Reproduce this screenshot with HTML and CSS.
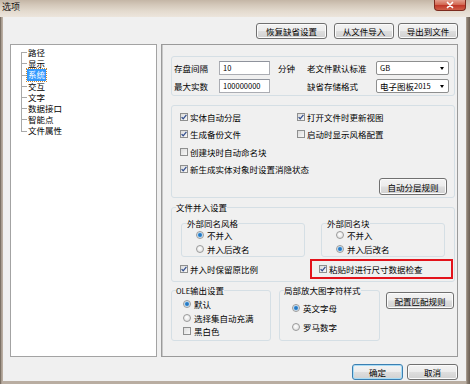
FILE: index.html
```html
<!DOCTYPE html>
<html lang="zh-CN">
<head>
<meta charset="UTF-8" />
<title>选项</title>
<link rel="stylesheet" href="styles.css">
</head>
<body>
<div class="window">
  <div class="titlebar">
    <span class="title">选项</span>
    <span class="close"><svg width="12" height="8" viewBox="0 0 12 8"><path d="M3.5 1.5L8.5 6.5M8.5 1.5L3.5 6.5" stroke="#fff" stroke-width="1.7" stroke-linecap="round"/></svg></span>
  </div>

  <div class="client">
    <div class="toolbar">
      <button class="btn b-restore">恢复缺省设置</button>
      <button class="btn b-file">从文件导入</button>
      <button class="btn b-file">导出到文件</button>
    </div>

    <div class="main">
      <ul class="tree">
        <li>路径</li>
        <li>显示</li>
        <li><span class="picked">系统</span></li>
        <li>交互</li>
        <li>文字</li>
        <li>数据接口</li>
        <li>智能点</li>
        <li>文件属性</li>
      </ul>

      <div class="panel">
        <!-- 存盘 -->
        <div class="grp g-save">
          <span class="lbl">存盘间隔</span>
          <span class="input">10</span>
          <span class="unit">分钟</span>
          <span class="lbl">老文件默认标准</span>
          <span class="combo"><span class="num">GB</span><i class="arrow"></i></span>

          <span class="lbl">最大实数</span>
          <span class="input">100000000</span>
          <span class="unit"></span>
          <span class="lbl">缺省存储格式</span>
          <span class="combo">电子图板<span class="num">2015</span><i class="arrow"></i></span>
        </div>

        <!-- 选项 -->
        <div class="grp g-opt">
          <div class="opts">
            <label class="chk"><span class="cb"><svg width="6" height="6" viewBox="0 0 6 6"><path d="M0.6 3.1L2.2 4.8L5.4 0.8" fill="none" stroke="#34508f" stroke-width="1.3"/></svg></span>实体自动分层</label>
            <label class="chk"><span class="cb"><svg width="6" height="6" viewBox="0 0 6 6"><path d="M0.6 3.1L2.2 4.8L5.4 0.8" fill="none" stroke="#34508f" stroke-width="1.3"/></svg></span>打开文件时更新视图</label>
            <label class="chk"><span class="cb"><svg width="6" height="6" viewBox="0 0 6 6"><path d="M0.6 3.1L2.2 4.8L5.4 0.8" fill="none" stroke="#34508f" stroke-width="1.3"/></svg></span>生成备份文件</label>
            <label class="chk"><span class="cb"></span>启动时显示风格配置</label>
            <label class="chk wide"><span class="cb"></span>创建块时自动命名块</label>
            <label class="chk wide"><span class="cb"><svg width="6" height="6" viewBox="0 0 6 6"><path d="M0.6 3.1L2.2 4.8L5.4 0.8" fill="none" stroke="#34508f" stroke-width="1.3"/></svg></span>新生成实体对象时设置消隐状态</label>
          </div>
          <button class="btn b-rule">自动分层规则</button>
        </div>

        <!-- 文件并入设置 -->
        <fieldset class="fs g-merge">
          <legend>文件并入设置</legend>
          <div class="merge-row">
            <fieldset class="fs sub">
              <legend>外部同名风格</legend>
              <label class="opt"><span class="rd on"></span>不并入</label>
              <label class="opt"><span class="rd"></span>并入后改名</label>
            </fieldset>
            <fieldset class="fs sub">
              <legend>外部同名块</legend>
              <label class="opt"><span class="rd"></span>不并入</label>
              <label class="opt"><span class="rd on"></span>并入后改名</label>
            </fieldset>
          </div>
          <div class="merge-foot">
            <label class="chk keep"><span class="cb"><svg width="6" height="6" viewBox="0 0 6 6"><path d="M0.6 3.1L2.2 4.8L5.4 0.8" fill="none" stroke="#34508f" stroke-width="1.3"/></svg></span>并入时保留原比例</label>
            <div class="flag">
              <label class="chk"><span class="cb"><svg width="6" height="6" viewBox="0 0 6 6"><path d="M0.6 3.1L2.2 4.8L5.4 0.8" fill="none" stroke="#34508f" stroke-width="1.3"/></svg></span>粘贴时进行尺寸数据检查</label>
            </div>
          </div>
        </fieldset>

        <!-- OLE / 局部放大 -->
        <div class="bottom-row">
          <fieldset class="fs g-ole">
            <legend><span class="num">OLE</span>输出设置</legend>
            <label class="opt"><span class="rd on"></span>默认</label>
            <label class="opt"><span class="rd"></span>选择集自动充满</label>
            <label class="opt"><span class="cb"></span>黑白色</label>
          </fieldset>
          <fieldset class="fs g-zoom">
            <legend>局部放大图字符样式</legend>
            <label class="opt"><span class="rd on"></span>英文字母</label>
            <label class="opt"><span class="rd"></span>罗马数字</label>
          </fieldset>
          <button class="btn b-match">配置匹配规则</button>
        </div>
      </div>
    </div>

    <div class="footer">
      <button class="btn b-ok">确定</button>
      <button class="btn b-cancel">取消</button>
    </div>
  </div>
</div>
</body>
</html>
```

FILE: styles.css
```css
*{box-sizing:border-box}
html,body{margin:0;height:100%}
body{
  width:470px;
  height:384px;
  overflow:hidden;
  background:#75695e;
  font-family:"Noto Sans CJK SC","Noto Sans",sans-serif;
  font-size:8.5px;
  color:#000;
}

.window{
  height:384px;
  display:flex;
  flex-direction:column;
  background:linear-gradient(90deg,#5f5449 0,#9a8e82 1px,#b9ada1 2px,#b9ada1 466px,#8d8174 467px,#6b5f54 470px);
}

/* 标题栏 */
.titlebar{
  height:17px;
  display:flex;
  align-items:flex-start;
  background:linear-gradient(180deg,#c4b6a6 0,#d4c8ba 5px,#e3dace 11px,#ece5dc 17px);
}
.title{
  padding-left:2px;
  line-height:14px;
  font-size:9px;
  color:#111;
}
.close{
  margin-left:auto;
  margin-right:4px;
  width:32px;
  height:11px;
  display:grid;
  place-items:center;
  border:1px solid #7c2a1e;
  border-top:0;
  border-radius:0 0 4px 4px;
  background:linear-gradient(180deg,#e3a08f 0,#d36a54 45%,#c0392a 55%,#d0614a 100%);
}

.client{
  height:364px;
  margin:0 4px 3px 3px;
  background:#f0f0f0;
}

/* 按钮 */
.btn{
  height:16px;
  padding:0;
  font:inherit;
  color:#000;
  border:1px solid #707070;
  border-radius:3px;
  background:linear-gradient(180deg,#f3f3f3 0,#ececec 48%,#dedede 52%,#d1d1d1 100%);
  box-shadow:inset 0 0 0 1px #fbfbfb;
}
.toolbar{
  height:22px;
  padding:6px 8px 0 0;
  display:flex;
  justify-content:flex-end;
  gap:4px;
}
.b-restore{width:71px;margin-right:3px}
.b-file{width:60px}

.main{
  height:313px;
  margin-top:5px;
  padding-left:7px;
  display:flex;
  gap:4px;
}

/* 树 */
.tree{
  width:147px;
  height:313px;
  margin:0;
  padding:2px 0 0;
  list-style:none;
  background:#fff;
  border:1px solid #a3a3a3;
}
.tree li{
  line-height:11.2px;
  padding-left:17px;
  white-space:nowrap;
  background:
    linear-gradient(#a9a9a9,#a9a9a9) 10px 0/1px 100% no-repeat,
    linear-gradient(#a9a9a9,#a9a9a9) 10px 50%/6px 1px no-repeat;
}
.tree li:first-child{
  background:
    linear-gradient(#a9a9a9,#a9a9a9) 10px 100%/1px 50% no-repeat,
    linear-gradient(#a9a9a9,#a9a9a9) 10px 50%/6px 1px no-repeat;
}
.tree li:last-child{
  background:
    linear-gradient(#a9a9a9,#a9a9a9) 10px 0/1px 50% no-repeat,
    linear-gradient(#a9a9a9,#a9a9a9) 10px 50%/6px 1px no-repeat;
}
.picked{
  display:inline-block;
  margin-left:-1px;
  padding:0 1px;
  background:#3399ff;
  color:#fff;
  outline:1px dotted #c9882f;
}

/* 右侧面板 */
.panel{
  width:297px;
  height:313px;
  padding:11px 2px 0 9px;
  border:1px solid #9a9a9a;
  box-shadow:inset 1px 0 0 #c8c8c8;
  background:#f0f0f0;
}
.grp{
  border:1px solid #d5dfe5;
  border-radius:3px;
}
.num{font-size:7.5px}

.g-save{
  height:40px;
  padding:4px 0 0 2px;
  display:grid;
  grid-template-columns:45px 51px 37px 69px 73px;
  grid-auto-rows:14px;
  row-gap:4px;
  align-items:center;
}
.lbl{white-space:nowrap}
.unit{padding-left:8px}
.input{
  height:14px;
  padding-left:3px;
  line-height:12px;
  font-size:7.5px;
  background:#fff;
  border:1px solid #abadb3;
  border-top-color:#8f939c;
}
.combo{
  height:14px;
  display:flex;
  align-items:center;
  padding-left:3px;
  line-height:12px;
  background:#fff;
  border:1px solid #8e8f8f;
  border-radius:2px;
}
.arrow{
  margin-left:auto;
  margin-right:4px;
  border-left:2.5px solid transparent;
  border-right:2.5px solid transparent;
  border-top:3px solid #000;
}

.g-opt{
  margin-top:9px;
  padding:2px 0 2px 8px;
}
.opts{
  display:grid;
  grid-template-columns:117px 1fr;
  grid-auto-rows:17.5px;
  align-items:center;
}
.chk,.opt{
  display:flex;
  align-items:center;
  gap:2px;
  white-space:nowrap;
}
.wide{grid-column:1 / -1}
.cb{
  width:8px;
  height:8px;
  flex:none;
  display:grid;
  place-items:center;
  border:1px solid #8e8f8f;
  background:linear-gradient(135deg,#dcdcdc,#f8f8f8);
}
.rd{
  width:8px;
  height:8px;
  flex:none;
  border-radius:50%;
  border:1px solid #9a9a9a;
  background:radial-gradient(circle at 45% 40%,#ffffff,#d8d8d8);
}
.rd.on{
  background:radial-gradient(circle,#1e63a8 0,#3b8fd6 1.6px,#cfe3f3 2.6px,#f2f2f2 3.2px);
}
.b-rule{
  display:block;
  width:68px;
  height:17px;
  margin:0 7px 0 auto;
}

/* 分组框 */
.fs{
  margin:0;
  min-width:0;
  padding:0 0 0 4px;
  border:1px solid #d5dfe5;
  border-radius:3px;
}
.fs legend{
  padding:0;
  line-height:11px;
}
.g-merge{
  margin-top:4px;
  padding-bottom:2px;
}
.merge-row{
  margin:5px 0 0 5px;
  display:flex;
  gap:16px;
}
.sub{
  width:124px;
  padding-left:5px;
}
.sub .opt{
  height:14px;
  margin-left:9px;
  gap:3px;
}
.sub .opt:first-of-type{margin-top:-1px}
.merge-foot{
  margin-top:2px;
  display:flex;
  align-items:center;
}
.keep{margin-left:4px}
.flag{
  width:143px;
  height:20px;
  margin-left:auto;
  margin-right:1px;
  padding-left:7px;
  display:flex;
  align-items:center;
  border:2px solid #e3131b;
}

.bottom-row{
  margin-top:3px;
  display:flex;
  align-items:flex-start;
}
.g-ole{
  width:100px;
  height:56px;
  padding-top:1.5px;
}
.g-ole .opt{
  height:13.5px;
  margin-left:7px;
  gap:3px;
}
.g-zoom{
  width:101px;
  height:56px;
  margin-left:8px;
  padding-top:2px;
}
.g-zoom .opt{
  height:19px;
  margin-left:8px;
  gap:3px;
}
.b-match{
  width:68px;
  height:17px;
  margin:7px 0 0 6px;
}

.footer{
  padding:7px 8px 0 0;
  display:flex;
  justify-content:flex-end;
  gap:4px;
}
.b-ok,.b-cancel{width:51px}
.b-ok{
  border-color:#3c7fb1;
  box-shadow:inset 0 0 0 1px #a7dcf6;
}
```
